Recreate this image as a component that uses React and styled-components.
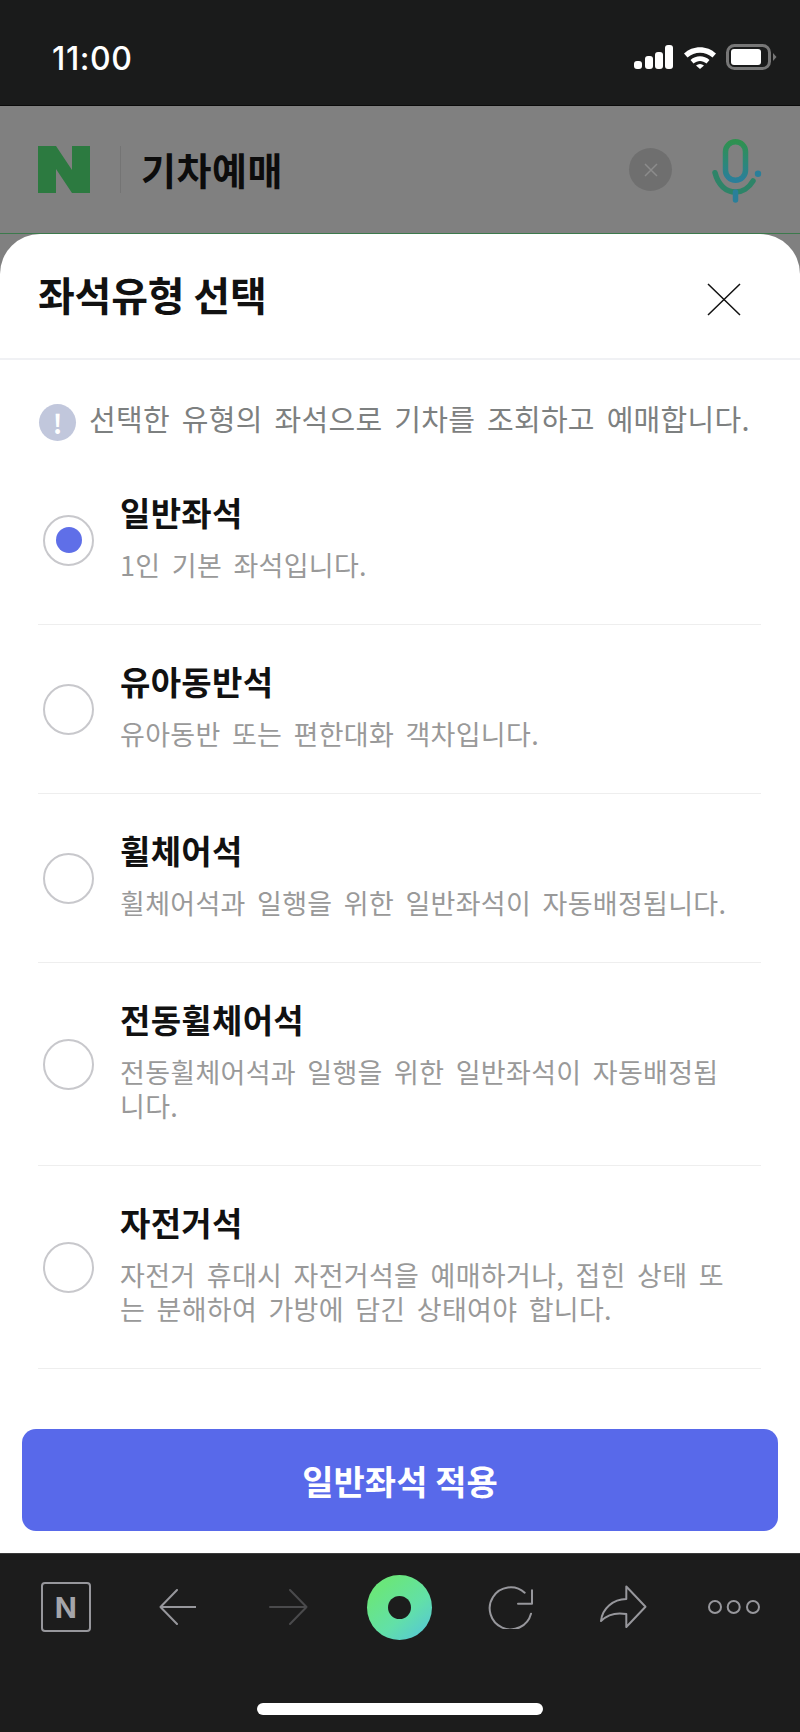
import React from "react";
import styled, { createGlobalStyle } from "styled-components";

const seats = [
  { title: "일반좌석", desc: "1인 기본 좌석입니다.", checked: true },
  { title: "유아동반석", desc: "유아동반 또는 편한대화 객차입니다." },
  { title: "휠체어석", desc: "휠체어석과 일행을 위한 일반좌석이 자동배정됩니다." },
  { title: "전동휠체어석", desc: "전동휠체어석과 일행을 위한 일반좌석이 자동배정됩니다." },
  { title: "자전거석", desc: "자전거 휴대시 자전거석을 예매하거나, 접힌 상태 또는 분해하여 가방에 담긴 상태여야 합니다." },
];

export default function App() {
  return (
    <>
      <GlobalStyle />
      <Phone>
        <StatusBar>
          <Time>11:00</Time>
          <StatusIcons>
            <svg width="40" height="24" viewBox="0 0 40 24">
              <rect x="0" y="16" width="8" height="8" rx="3" fill="#fff" />
              <rect x="11" y="11" width="8" height="13" rx="3" fill="#fff" />
              <rect x="21" y="7" width="8" height="17" rx="3" fill="#fff" />
              <rect x="31" y="0" width="8" height="24" rx="3" fill="#fff" />
            </svg>
            <svg width="32" height="24" viewBox="0 0 32 24">
              <path d="M0 8.500C8.500 0 23.500 0 32 8.500L28.500 12.500C21.500 6 10.500 6 3.500 12.500Z" fill="#fff" />
              <path d="M6.500 15C12 10 20 10 25.500 15L22.500 18.500C18.500 15 13.500 15 9.500 18.500Z" fill="#fff" />
              <path d="M12 20.500C14.500 18.500 17.500 18.500 20 20.500L16 24Z" fill="#fff" />
            </svg>
            <svg width="51" height="26" viewBox="0 0 51 26">
              <rect x="1.500" y="1.500" width="42" height="23" rx="7" fill="none" stroke="#777" strokeWidth="3" />
              <rect x="5" y="5" width="30" height="16" rx="3" fill="#fff" />
              <path d="M47 9L50.500 13L47 17Z" fill="#777" />
            </svg>
          </StatusIcons>
        </StatusBar>

        <SearchBar>
          <svg width="52" height="47" viewBox="0 0 52 47">
            <path d="M0 0H18L34 24V0H52V47H34L18 23V47H0Z" fill="#2c7a40" />
          </svg>
          <SearchDivider />
          <SearchText>기차예매</SearchText>
          <ClearButton>
            <svg width="16" height="16" viewBox="0 0 16 16">
              <path d="M2 2L14 14M14 2L2 14" stroke="#8c8c8c" strokeWidth="1.500" />
            </svg>
          </ClearButton>
          <svg width="51" height="66" viewBox="0 0 51 66">
            <defs>
              <linearGradient id="mic" x1="0" y1="0" x2="0" y2="1">
                <stop offset="0" stopColor="#2f9150" />
                <stop offset="1" stopColor="#2a7f9a" />
              </linearGradient>
            </defs>
            <rect x="13.500" y="4.750" width="20" height="38.500" rx="10" fill="none" stroke="url(#mic)" strokeWidth="5.500" />
            <path d="M3 35.700C6 48 14 55 23.500 55C30 55 37 51 41 44" fill="none" stroke="#2e8468" strokeWidth="5.500" strokeLinecap="round" />
            <path d="M23.500 55V63" stroke="#2a7f9a" strokeWidth="5.500" strokeLinecap="round" />
            <circle cx="46" cy="36.700" r="3.200" fill="#2a7f9a" />
          </svg>
        </SearchBar>

        <Sheet>
          <SheetHeader>
            <SheetTitle>좌석유형 선택</SheetTitle>
            <CloseIcon width="34" height="33" viewBox="0 0 34 33">
              <path d="M1 1L33 32M33 1L1 32" stroke="#111" strokeWidth="1.500" />
            </CloseIcon>
          </SheetHeader>
          <Notice>
            <NoticeIcon>!</NoticeIcon>
            <NoticeText>선택한 유형의 좌석으로 기차를 조회하고 예매합니다.</NoticeText>
          </Notice>
          <SeatList>
            {seats.map((seat) => (
              <SeatRow key={seat.title}>
                <Radio $checked={seat.checked} />
                <SeatText>
                  <SeatTitle>{seat.title}</SeatTitle>
                  <SeatDesc>{seat.desc}</SeatDesc>
                </SeatText>
              </SeatRow>
            ))}
          </SeatList>
          <ApplyButton>일반좌석 적용</ApplyButton>
        </Sheet>

        <BottomBar>
          <ToolRow>
            <NBox>N</NBox>
            <svg width="37" height="36" viewBox="0 0 37 36">
              <path d="M18 1L1.500 18L18 35M1.500 18H37" fill="none" stroke="#97979c" strokeWidth="2" strokeLinecap="round" strokeLinejoin="round" />
            </svg>
            <svg width="39" height="36" viewBox="0 0 39 36">
              <path d="M21 1L37.500 18L21 35M37.500 18H1" fill="none" stroke="#4a4a4c" strokeWidth="2" strokeLinecap="round" strokeLinejoin="round" />
            </svg>
            <GreenDot />
            <svg width="46" height="44" viewBox="0 0 46 44">
              <path d="M43 28.700A21 21 0 1 1 36.700 7.700" fill="none" stroke="#97979c" strokeWidth="2" strokeLinecap="round" />
              <path d="M44 5.300V18.700H30" fill="none" stroke="#97979c" strokeWidth="2" strokeLinecap="round" strokeLinejoin="round" />
            </svg>
            <svg width="48" height="44" viewBox="0 0 48 44">
              <path d="M27.300 1.500L46.500 21.700L27.300 42V29C16 27 8 30 2 36C3 24 14 14 27.300 14Z" fill="none" stroke="#97979c" strokeWidth="2" strokeLinejoin="round" />
            </svg>
            <svg width="52" height="14" viewBox="0 0 52 14">
              <circle cx="7" cy="7" r="6" fill="none" stroke="#97979c" strokeWidth="2" />
              <circle cx="25.700" cy="7" r="6" fill="none" stroke="#97979c" strokeWidth="2" />
              <circle cx="45" cy="7" r="6" fill="none" stroke="#97979c" strokeWidth="2" />
            </svg>
          </ToolRow>
          <HomeBar />
        </BottomBar>
      </Phone>
    </>
  );
}

const GlobalStyle = createGlobalStyle`
  html, body {
    margin: 0;
    padding: 0;
    background: #1b1b1b;
  }
  * {
    box-sizing: border-box;
  }
`;

const Phone = styled.div`
  width: 800px;
  height: 1732px;
  display: flex;
  flex-direction: column;
  overflow: hidden;
  background: #808080;
  font-family: "Noto Sans CJK KR", "Noto Sans", sans-serif;
`;

const StatusBar = styled.div`
  height: 106px;
  padding: 12px 23px 0 52px;
  display: flex;
  align-items: center;
  justify-content: space-between;
  background: #1a1b1b;
  border-bottom: 1px solid #0b0b0b;
`;

const Time = styled.div`
  font-family: Inter, sans-serif;
  font-size: 32px;
  font-weight: 500;
  letter-spacing: 0.6px;
  color: #fff;
`;

const StatusIcons = styled.div`
  margin-bottom: 3px;
  display: flex;
  align-items: center;
  gap: 10px;
`;

const SearchBar = styled.div`
  height: 128px;
  padding: 0 37px 0 38px;
  display: flex;
  align-items: center;
  background: #808080;
  border-bottom: 1px solid #3c7a4c;
`;

const SearchDivider = styled.div`
  width: 1px;
  height: 47px;
  margin: 0 20px 0 30px;
  background: #747474;
`;

const SearchText = styled.div`
  flex: 1;
  padding-bottom: 2px;
  font-size: 38px;
  font-weight: 700;
  letter-spacing: 0.5px;
  color: #0c0c0c;
`;

const ClearButton = styled.div`
  width: 43px;
  height: 43px;
  margin-right: 40px;
  display: flex;
  align-items: center;
  justify-content: center;
  border-radius: 50%;
  background: #6f6f6f;
`;

const Sheet = styled.div`
  flex: 1;
  display: flex;
  flex-direction: column;
  border-radius: 40px 40px 0 0;
  background: #fff;
`;

const SheetHeader = styled.div`
  height: 126px;
  padding: 0 59px 0 38px;
  display: flex;
  align-items: center;
  justify-content: space-between;
  border-bottom: 2px solid #f0f1f4;
`;

const SheetTitle = styled.div`
  padding-bottom: 4px;
  font-size: 40px;
  font-weight: 700;
  letter-spacing: -0.2px;
  color: #111;
`;

const CloseIcon = styled.svg`
  margin-top: 6px;
`;

const Notice = styled.div`
  margin: 44px 38px 15px 39px;
  display: flex;
  align-items: flex-start;
  gap: 13px;
`;

const NoticeIcon = styled.div`
  width: 37px;
  height: 37px;
  display: flex;
  align-items: center;
  justify-content: center;
  border-radius: 50%;
  background: #c1c7dc;
  color: #fff;
  font-size: 26px;
  font-weight: 700;
`;

const NoticeText = styled.div`
  margin-top: -4px;
  font-size: 29px;
  line-height: 37px;
  letter-spacing: 0.3px;
  word-spacing: 5px;
  color: #7d8080;
  white-space: nowrap;
`;

const SeatList = styled.div`
  margin: 0 39px 0 38px;
  flex: 1;
`;

const SeatRow = styled.div`
  padding: 34px 26px 42px 5px;
  display: flex;
  align-items: center;
  gap: 26px;
  border-bottom: 1px solid #eeeeee;
`;

const Radio = styled.div`
  flex: none;
  width: 51px;
  height: 51px;
  margin-top: 8px;
  display: flex;
  align-items: center;
  justify-content: center;
  border: 2px solid #c8c8cc;
  border-radius: 50%;
  &::after {
    content: "";
    display: ${(p) => (p.$checked ? "block" : "none")};
    width: 26px;
    height: 26px;
    border-radius: 50%;
    background: #5f6fe8;
  }
`;

const SeatText = styled.div`
  flex: 1;
`;

const SeatTitle = styled.div`
  font-size: 33px;
  line-height: 44px;
  font-weight: 700;
  letter-spacing: 0.3px;
  color: #111;
`;

const SeatDesc = styled.div`
  margin-top: 14px;
  font-size: 27px;
  line-height: 34px;
  letter-spacing: 0.3px;
  word-spacing: 5px;
  word-break: break-all;
  color: #999;
`;

const ApplyButton = styled.button`
  height: 102px;
  margin: 0 22px 22px;
  border: none;
  border-radius: 14px;
  background: #5869ea;
  color: #fff;
  font-family: inherit;
  font-size: 34px;
  font-weight: 700;
`;

const BottomBar = styled.div`
  height: 179px;
  display: flex;
  flex-direction: column;
  align-items: center;
  background: #1c1c1c;
  border-top: 1px solid #3a3a3a;
`;

const ToolRow = styled.div`
  width: 100%;
  height: 106px;
  padding: 0 10px;
  display: grid;
  grid-template-columns: repeat(7, 1fr);
  align-items: center;
  justify-items: center;
`;

const NBox = styled.div`
  width: 50px;
  height: 50px;
  display: flex;
  align-items: center;
  justify-content: center;
  border: 2px solid #97979c;
  border-radius: 4px;
  color: #a5a5aa;
  font-family: Inter, sans-serif;
  font-size: 29px;
  font-weight: 700;
`;

const GreenDot = styled.div`
  width: 65px;
  height: 65px;
  display: flex;
  align-items: center;
  justify-content: center;
  border-radius: 50%;
  background: linear-gradient(140deg, #6ae67c 20%, #62e0a8 60%, #55c6d8 95%);
  &::after {
    content: "";
    width: 23px;
    height: 23px;
    border-radius: 50%;
    background: #1c1c1c;
  }
`;

const HomeBar = styled.div`
  width: 286px;
  height: 12px;
  margin-top: 43px;
  border-radius: 6px;
  background: #fff;
`;
